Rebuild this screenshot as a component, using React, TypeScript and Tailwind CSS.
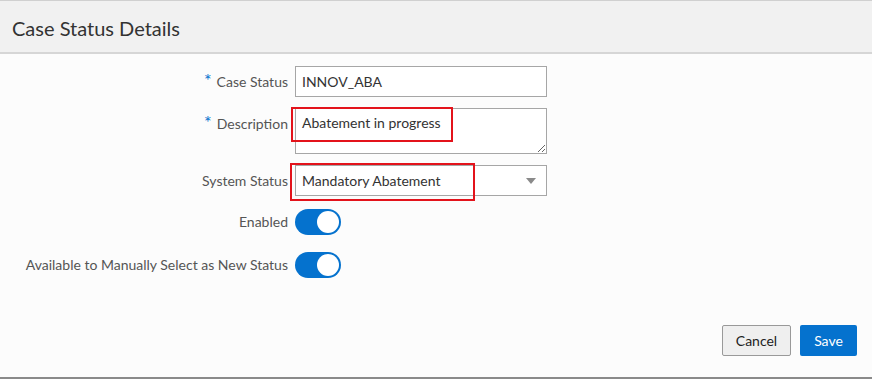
import { ReactNode } from 'react';

const font = { fontFamily: '"Segoe UI", Lato, "Liberation Sans", sans-serif' };

function Label({ text, required }: { text: string; required?: boolean }) {
  return (
    <div className="flex h-[31px] items-center justify-end pr-[7px] text-[14px] text-[#555]">
      {required && <span className="mr-[5px] -mt-[3px] text-[18px] leading-none text-[#0572ce]">*</span>}
      <span>{text}</span>
    </div>
  );
}

function Toggle() {
  return (
    <div className="flex h-[26px] w-[46px] items-center justify-end rounded-full bg-[#0572ce] px-[2px]">
      <div className="h-[22px] w-[22px] rounded-full bg-white" />
    </div>
  );
}

function Row({ label, required, children, className }: { label: string; required?: boolean; children: ReactNode; className?: string }) {
  return (
    <div className={`grid grid-cols-[295px_252px] items-start ${className ?? ''}`}>
      <Label text={label} required={required} />
      {children}
    </div>
  );
}

export default function App() {
  return (
    <div className="flex h-[379px] w-[872px] flex-col bg-[#fcfcfc]" style={font}>
      <div className="flex h-[54px] items-center border-t border-b-2 border-t-[#d0d0d0] border-b-[#d6d6d6] bg-[#f1f1f1] pl-[12px] pt-[3px]">
        <h1 className="text-[20px] text-[#333]">Case Status Details</h1>
      </div>

      <div className="flex flex-1 flex-col pt-[12px]">
        <Row label="Case Status" required>
          <div className="flex h-[31px] items-center border border-[#a6a6a6] bg-white px-[6px] text-[14px] text-[#333]">
            INNOV_ABA
          </div>
        </Row>

        <Row label="Description" required className="mt-[11px]">
          <div className="relative">
            <textarea
              readOnly
              value="Abatement in progress"
              className="block h-[46px] w-[252px] resize-y border border-[#a6a6a6] bg-white px-[6px] pt-[4px] text-[14px] leading-[19px] text-[#333] outline-none"
            />
            <div className="absolute -left-[4px] -top-[1px] h-[35px] w-[162px] border-2 border-[#e3131b]" />
          </div>
        </Row>

        <Row label="System Status" className="mt-[11px]">
          <div className="relative">
            <div className="flex h-[31px] items-center justify-between border border-[#a6a6a6] bg-white pl-[6px] pr-[10px] text-[14px] text-[#333]">
              <span>Mandatory Abatement</span>
              <svg width="10" height="6" viewBox="0 0 10 6">
                <path d="M0 0h10L5 6z" fill="#8a8a8a" />
              </svg>
            </div>
            <div className="absolute -left-[5px] -top-[2px] h-[38px] w-[185px] border-2 border-[#e3131b]" />
          </div>
        </Row>

        <Row label="Enabled" className="mt-[10px]">
          <div className="flex h-[31px] items-center">
            <Toggle />
          </div>
        </Row>

        <Row label="Available to Manually Select as New Status" className="mt-[12px]">
          <div className="flex h-[31px] items-center">
            <Toggle />
          </div>
        </Row>

        <div className="mt-auto flex justify-end gap-[9px] pb-[21px] pr-[15px]">
          <button className="h-[31px] w-[69px] rounded-[2px] border border-[#999] bg-[#efefef] text-[14px] text-[#222]">
            Cancel
          </button>
          <button className="h-[31px] w-[57px] rounded-[2px] bg-[#0572ce] text-[14px] text-white">
            Save
          </button>
        </div>
      </div>
      <div className="h-[2px] bg-[#8a8a8a]" />
    </div>
  );
}
